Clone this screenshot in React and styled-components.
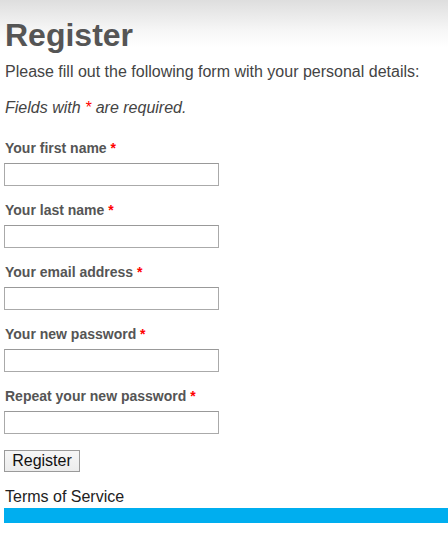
import React from 'react';
import styled, { createGlobalStyle } from 'styled-components';

const GlobalStyle = createGlobalStyle`
  html, body {
    margin: 0;
    padding: 0;
  }
  body {
    font-family: "Liberation Sans", Arial, sans-serif;
    color: #444;
    background: linear-gradient(#dedede 0, #f6f6f6 30px, #fff 48px) no-repeat;
    background-color: #fff;
    min-height: 551px;
  }
`;

const Page = styled.div`
  padding: 0 0 0 4px;
  overflow: hidden;
`;

const Title = styled.h1`
  margin: 17px 0 0 1px;
  font-size: 32px;
  line-height: 36px;
  font-weight: bold;
  color: #555;
`;

const Text = styled.p`
  margin: ${p => p.$top || 0}px 0 0 1px;
  font-size: 16px;
  line-height: 20px;
  font-style: ${p => (p.$italic ? 'italic' : 'normal')};
  color: #444;
`;

const Star = styled.span`
  color: #f00;
  font-weight: ${p => (p.$bold ? 'bold' : 'normal')};
`;

const Form = styled.form`
  display: flex;
  flex-direction: column;
  margin-top: 21px;
`;

const Field = styled.div`
  display: flex;
  flex-direction: column;
  align-items: flex-start;
  margin-bottom: 15px;
`;

const Label = styled.label`
  font-size: 14px;
  line-height: 18px;
  font-weight: bold;
  color: #555;
  margin-left: 1px;
`;

const Input = styled.input`
  box-sizing: border-box;
  width: 215px;
  height: 23px;
  margin: 6px 0 0;
  padding: 2px 4px;
  border: 1px solid #aaa;
  border-top-color: #999;
  background: #fff;
  font: 14px "Liberation Sans", Arial, sans-serif;
  outline: none;
`;

const Button = styled.button`
  align-self: flex-start;
  box-sizing: border-box;
  height: 22px;
  width: 76px;
  margin: 1px 0 0;
  padding: 0;
  border: 1px solid #9a9a9a;
  background: linear-gradient(#f6f6f6, #ececec);
  font: 16px/20px "Liberation Sans", Arial, sans-serif;
  color: #111;
`;

const Terms = styled.a`
  display: block;
  margin: 15px 0 0 1px;
  font-size: 16px;
  line-height: 20px;
  color: #222;
  text-decoration: none;
`;

const Bar = styled.div`
  height: 15px;
  margin-top: 1px;
  margin-right: -20px;
  background: #00aeef;
`;

const fields = [
  'Your first name',
  'Your last name',
  'Your email address',
  'Your new password',
  'Repeat your new password',
];

export default function App() {
  return (
    <>
      <GlobalStyle />
      <Page>
        <Title>Register</Title>
        <Text $top={9}>Please fill out the following form with your personal details:</Text>
        <Text $top={16} $italic>
          Fields with <Star>*</Star> are required.
        </Text>
        <Form onSubmit={e => e.preventDefault()}>
          {fields.map((f, i) => (
            <Field key={f}>
              <Label>
                {f} <Star $bold>*</Star>
              </Label>
              <Input type={i > 2 ? 'password' : i === 2 ? 'email' : 'text'} />
            </Field>
          ))}
          <Button type="submit">Register</Button>
        </Form>
        <Terms href="#">Terms of Service</Terms>
        <Bar />
      </Page>
    </>
  );
}
